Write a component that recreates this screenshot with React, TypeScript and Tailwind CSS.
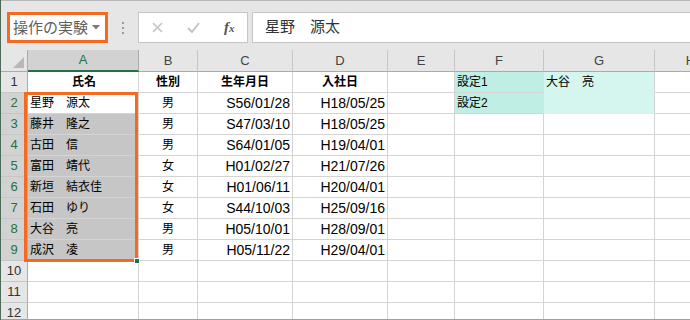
import React from 'react';

const FONT = '[font-family:"Liberation_Sans","Noto_Sans_CJK_JP",sans-serif]';

const cols = ['A', 'B', 'C', 'D', 'E', 'F', 'G', 'H'];

type Row = { a?: string; b?: string; c?: string; d?: string; f?: string; g?: string };

const rows: Row[] = [
    { a: '氏名', b: '性別', c: '生年月日', d: '入社日', f: '設定1', g: '大谷　亮' },
    { a: '星野　源太', b: '男', c: 'S56/01/28', d: 'H18/05/25', f: '設定2' },
    { a: '藤井　隆之', b: '男', c: 'S47/03/10', d: 'H18/05/25' },
    { a: '古田　信', b: '男', c: 'S64/01/05', d: 'H19/04/01' },
    { a: '富田　靖代', b: '女', c: 'H01/02/27', d: 'H21/07/26' },
    { a: '新垣　結衣佳', b: '女', c: 'H01/06/11', d: 'H20/04/01' },
    { a: '石田　ゆり', b: '女', c: 'S44/10/03', d: 'H25/09/16' },
    { a: '大谷　亮', b: '男', c: 'H05/10/01', d: 'H28/09/01' },
    { a: '成沢　凌', b: '男', c: 'H05/11/22', d: 'H29/04/01' },
    {},
    {},
    {},
];

const cell = 'h-[21px] border-r border-b border-[#d4d4d4] flex items-center text-[12px] text-black whitespace-nowrap overflow-hidden';

export default function App() {
    return (
        <div className={`w-[690px] h-[320px] overflow-hidden bg-[#e6e6e6] border-l border-[#4d6b58] flex flex-col ${FONT}`}>
            {/* Formula bar */}
            <div className="h-[50px] shrink-0 border-t border-[#b8b8b8] flex items-start pt-[11px] pl-[6px]">
                <div className="w-[101px] h-[31px] border-[3px] border-[#f26b21] bg-white flex items-center pl-[3px] pr-[5px]">
                    <span className="text-[15px] text-[#5f5f5f] leading-none">操作の実験</span>
                    <svg width="8" height="5" viewBox="0 0 8 5" className="ml-auto">
                        <path d="M0 0H8L4 4.5Z" fill="#7a7a7a" />
                    </svg>
                </div>
                <div className="w-[30px] h-[31px] flex flex-col items-center justify-center gap-[3px]">
                    <span className="w-[2px] h-[2px] bg-[#9c9c9c]" />
                    <span className="w-[2px] h-[2px] bg-[#9c9c9c]" />
                    <span className="w-[2px] h-[2px] bg-[#9c9c9c]" />
                </div>
                <div className="w-[110px] h-[31px] border border-[#c6c6c6] bg-white flex items-center">
                    <div className="w-[38px] flex justify-center">
                        <svg width="11" height="11" viewBox="0 0 11 11">
                            <path d="M1 1L10 10M10 1L1 10" stroke="#c4c4c4" strokeWidth="1.6" />
                        </svg>
                    </div>
                    <div className="w-[36px] flex justify-center">
                        <svg width="13" height="11" viewBox="0 0 13 11">
                            <path d="M1 6L5 10L12 1" stroke="#c4c4c4" strokeWidth="2" fill="none" />
                        </svg>
                    </div>
                    <div className="w-[36px] flex justify-center">
                        <span className="[font-family:'Liberation_Serif',serif] italic text-[15px] text-[#555] leading-none font-bold">f<span className="text-[11px]">x</span></span>
                    </div>
                </div>
                <div className="ml-[4px] flex-1 h-[31px] border border-[#c6c6c6] border-r-0 bg-white flex items-center pl-[12px]">
                    <span className="text-[15px] text-[#333]">星野　源太</span>
                </div>
            </div>

            {/* Sheet */}
            <div className="relative flex-1 overflow-hidden bg-white border-b border-[#a0a0a0]">
                <div className="grid grid-cols-[27px_111px_59px_95px_95px_67px_89px_111px_72px] w-max">
                    {/* Column headers */}
                    <div className="h-[22px] bg-[#e6e6e6] border-r border-b border-[#ababab] relative overflow-hidden">
                        <svg width="11" height="11" viewBox="0 0 11 11" className="absolute right-[3px] bottom-[3px]">
                            <path d="M11 0V11H0Z" fill="#b8b8b8" />
                        </svg>
                    </div>
                    {cols.map((c) => (
                        <div
                            key={c}
                            className={
                                c === 'A'
                                    ? 'h-[22px] bg-[#d2d2d2] border-r border-[#ababab] border-b-2 border-b-[#217346] flex items-center justify-center text-[13px] text-[#217346]'
                                    : 'h-[22px] bg-[#e6e6e6] border-r border-b border-r-[#c6c6c6] border-b-[#ababab] flex items-center justify-center text-[13px] text-[#444]'
                            }
                        >
                            {c}
                        </div>
                    ))}

                    {rows.map((r, i) => {
                        const n = i + 1;
                        const sel = n >= 2 && n <= 9;
                        const bold = n === 1;
                        return (
                            <React.Fragment key={n}>
                                <div
                                    className={`h-[21px] border-r border-b flex items-center justify-center text-[13px] ${
                                        sel
                                            ? 'bg-[#d2d2d2] text-[#217346] border-r-[#ababab] border-b-[#c6c6c6]'
                                            : 'bg-[#e6e6e6] text-[#333] border-r-[#ababab] border-b-[#c6c6c6]'
                                    }`}
                                >
                                    {n}
                                </div>
                                <div
                                    className={`${cell} pl-[2px] ${bold ? 'justify-center font-bold' : ''} ${
                                        n >= 3 && n <= 9 ? 'bg-[#c6c6c6]' : ''
                                    }`}
                                >
                                    {r.a}
                                </div>
                                <div className={`${cell} justify-center ${bold ? 'font-bold' : ''}`}>{r.b}</div>
                                <div className={`${cell} ${bold ? 'justify-center font-bold' : 'justify-end pr-[2px] text-[14px]'}`}>{r.c}</div>
                                <div className={`${cell} ${bold ? 'justify-center font-bold' : 'justify-end pr-[2px] text-[14px]'}`}>{r.d}</div>
                                <div className={cell} />
                                <div className={`${cell} pl-[2px] ${n <= 2 ? 'bg-[#bfefe4] border-[#bfefe4] border-r-[#bfefe4]' : ''}`}>{r.f}</div>
                                <div className={`${cell} pl-[2px] ${n <= 2 ? 'bg-[#d5f6ee] border-b-[#d5f6ee]' : ''}`}>{r.g}</div>
                                <div className={cell} />
                            </React.Fragment>
                        );
                    })}
                </div>

                {/* Selection A2:A9 */}
                <div className="absolute left-[23px] top-[42px] w-[114px] h-[170px] border-[3px] border-[#f26b21] pointer-events-none" />
                <div className="absolute left-[133px] top-[208px] w-[6px] h-[6px] bg-[#217346] border border-white" />
            </div>
        </div>
    );
}
